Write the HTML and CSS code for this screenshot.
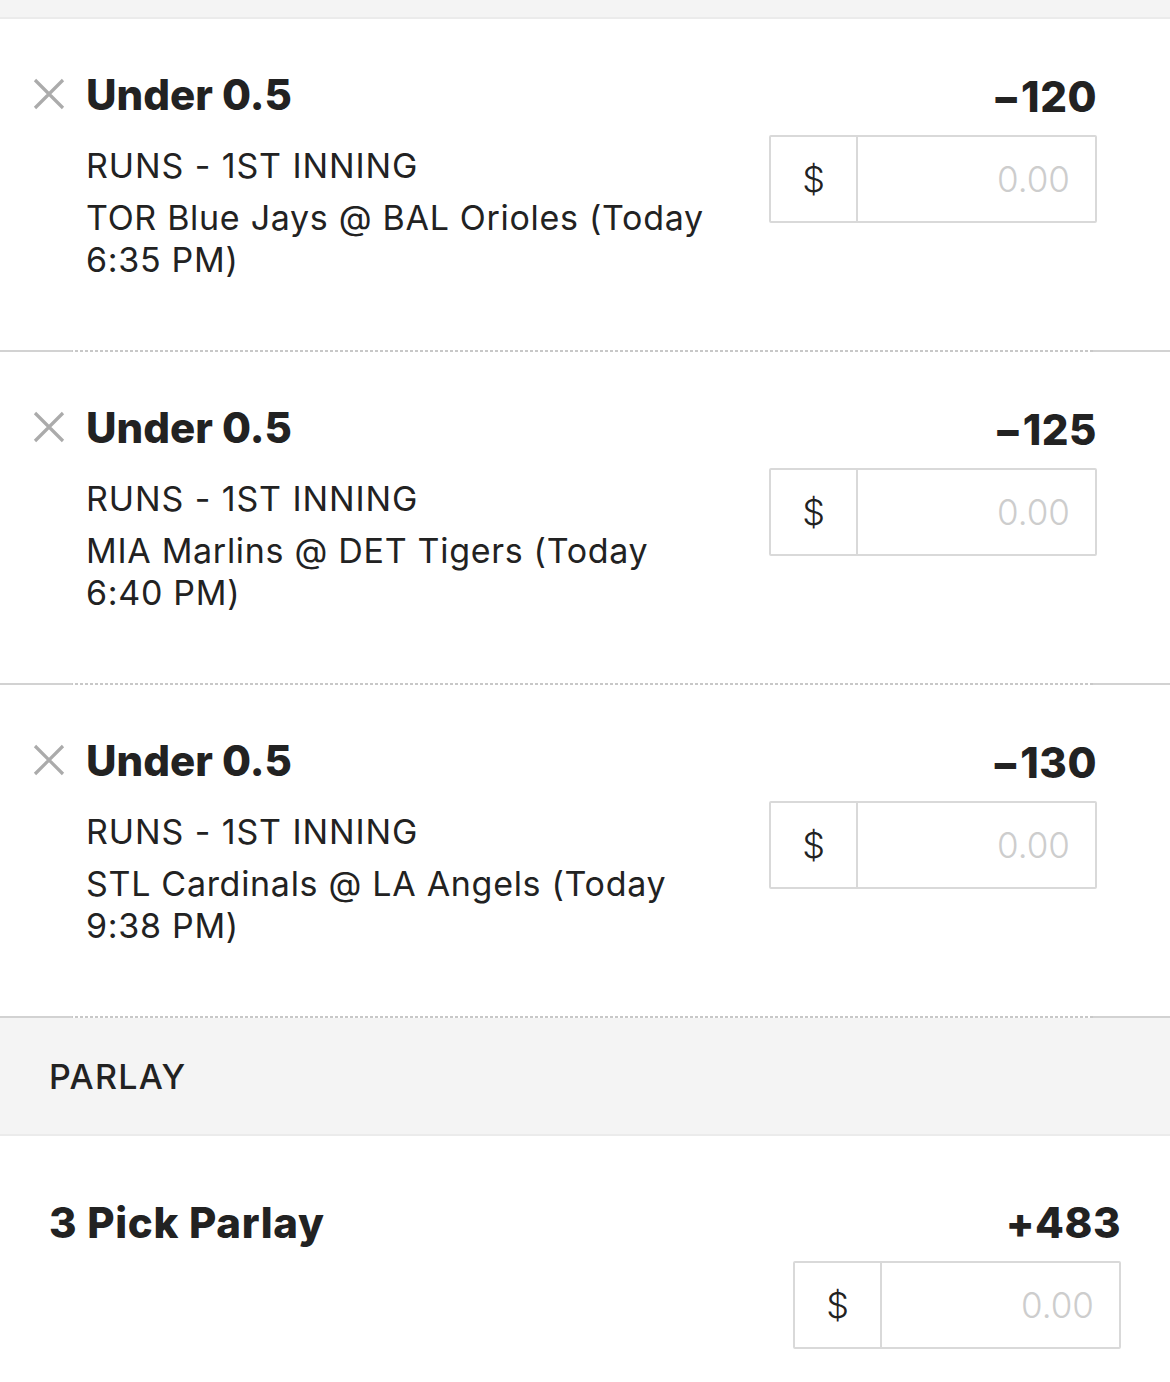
FILE: index.html
```html
<!DOCTYPE html>
<html>
<head>
<meta charset="utf-8">
<link rel="stylesheet" href="styles.css">
</head>
<body>
<div class="topbar"></div>

<div class="bet">
  <div class="remove"><svg viewBox="0 0 32 32" width="32" height="32"><path d="M2 2 L30 30 M30 2 L2 30" stroke="#ababab" stroke-width="3.2" fill="none"/></svg></div>
  <div class="info">
    <div class="title">Under 0.5</div>
    <div class="market">RUNS - 1ST INNING</div>
    <div class="game">TOR Blue Jays @ BAL Orioles (Today 6:35 PM)</div>
  </div>
  <div class="wager">
    <div class="odds">&minus;120</div>
    <div class="stake"><span class="cur">$</span><span class="amt">0.00</span></div>
  </div>
</div>
<div class="sep"></div>

<div class="bet">
  <div class="remove"><svg viewBox="0 0 32 32" width="32" height="32"><path d="M2 2 L30 30 M30 2 L2 30" stroke="#ababab" stroke-width="3.2" fill="none"/></svg></div>
  <div class="info">
    <div class="title">Under 0.5</div>
    <div class="market">RUNS - 1ST INNING</div>
    <div class="game">MIA Marlins @ DET Tigers (Today 6:40 PM)</div>
  </div>
  <div class="wager">
    <div class="odds">&minus;125</div>
    <div class="stake"><span class="cur">$</span><span class="amt">0.00</span></div>
  </div>
</div>
<div class="sep"></div>

<div class="bet">
  <div class="remove"><svg viewBox="0 0 32 32" width="32" height="32"><path d="M2 2 L30 30 M30 2 L2 30" stroke="#ababab" stroke-width="3.2" fill="none"/></svg></div>
  <div class="info">
    <div class="title">Under 0.5</div>
    <div class="market">RUNS - 1ST INNING</div>
    <div class="game">STL Cardinals @ LA Angels (Today 9:38 PM)</div>
  </div>
  <div class="wager">
    <div class="odds">&minus;130</div>
    <div class="stake"><span class="cur">$</span><span class="amt">0.00</span></div>
  </div>
</div>
<div class="sep"></div>

<div class="section">PARLAY</div>

<div class="parlay">
  <div class="title">3 Pick Parlay</div>
  <div class="wager">
    <div class="odds">+483</div>
    <div class="stake"><span class="cur">$</span><span class="amt">0.00</span></div>
  </div>
</div>
</body>
</html>
```

FILE: styles.css
```css
html, body {
  margin: 0;
  padding: 0;
  background: #fff;
}
body {
  font-family: Inter, "Liberation Sans", sans-serif;
  color: #222;
  width: 1170px;
  height: 1382px;
  overflow: hidden;
}
.topbar {
  height: 17px;
  background: #f4f4f4;
  border-bottom: 2px solid #ebebeb;
}
.bet {
  display: flex;
  align-items: flex-start;
  height: 331px;
  box-sizing: border-box;
  padding: 59px 73px 0 33px;
}
.remove {
  width: 32px;
  height: 32px;
  margin-right: 21px;
  flex: none;
}
.remove svg { display: block; }
.info {
  flex: 1;
  min-width: 0;
}
.title {
  font-size: 42px;
  font-weight: 800;
  line-height: 50px;
  margin-top: -8px;
}
.market {
  font-size: 34px;
  line-height: 42px;
  letter-spacing: 0.9px;
  margin-top: 25px;
}
.game {
  font-size: 34px;
  line-height: 42px;
  letter-spacing: 0.7px;
  margin-top: 10px;
  max-width: 640px;
}
.wager {
  width: 328px;
  flex: none;
  display: flex;
  flex-direction: column;
  align-items: flex-end;
}
.odds {
  font-size: 42px;
  font-weight: 800;
  line-height: 50px;
  letter-spacing: 0.5px;
  margin-top: -6px;
}
.stake {
  margin-top: 13px;
  width: 328px;
  height: 88px;
  box-sizing: border-box;
  border: 2px solid #d9d9d9;
  border-radius: 2px;
  display: flex;
}
.cur {
  width: 85px;
  border-right: 2px solid #d9d9d9;
  display: flex;
  align-items: center;
  justify-content: center;
  font-size: 36px;
  font-weight: 300;
  color: #222;
}
.amt {
  flex: 1;
  display: flex;
  align-items: center;
  justify-content: flex-end;
  padding-right: 25px;
  font-size: 35px;
  font-weight: 300;
  color: #cdcdcd;
}
.sep {
  height: 2px;
  background:
    linear-gradient(#d2d2d2, #d2d2d2) left / 72px 2px no-repeat,
    linear-gradient(#d2d2d2, #d2d2d2) right / 77px 2px no-repeat,
    repeating-linear-gradient(90deg, #c8c8c8 0 3px, transparent 3px 5px);
}
.section {
  height: 118px;
  box-sizing: border-box;
  background: #f4f4f4;
  border-bottom: 2px solid #ebebeb;
  padding-left: 49px;
  display: flex;
  align-items: center;
  font-size: 34px;
  font-weight: 500;
  letter-spacing: 1.3px;
}
.parlay {
  display: flex;
  justify-content: space-between;
  align-items: flex-start;
  padding: 60px 49px 0 49px;
}
.parlay .title {
  margin-top: 2px;
  letter-spacing: 0.7px;
}
.parlay .odds {
  margin-top: 2px;
}
```
